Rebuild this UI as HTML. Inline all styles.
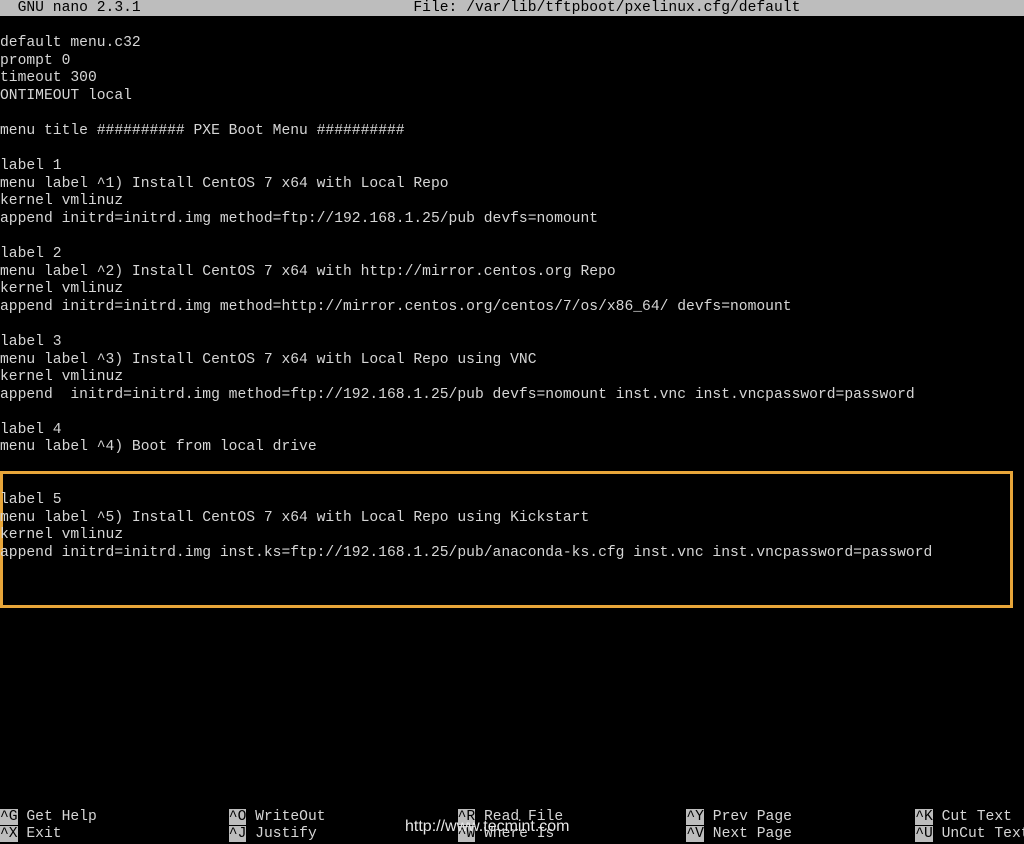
<!DOCTYPE html>
<html><head><meta charset="utf-8"><style>
html,body{margin:0;padding:0;background:#000;width:1024px;height:844px;overflow:hidden}
pre{margin:0;position:absolute;left:0;top:0;font-family:"Liberation Mono","DejaVu Sans Mono",monospace;font-size:14.67px;line-height:17.58px;color:#d6d6d6;white-space:pre}
.bar{position:absolute;left:0;top:0;width:1024px;height:16px;background:#bdbdbd}
.t{color:#000}
.k{background:#bdbdbd;color:#000}
.box{position:absolute;left:0;top:471px;width:1007px;height:131px;border:3px solid #e8a63a;box-sizing:content-box}
.wm{position:absolute;left:405px;top:818px;font-family:"Liberation Sans",sans-serif;font-size:16px;color:#e8e8e8}
.sc{position:absolute;left:0;font-family:"Liberation Mono","DejaVu Sans Mono",monospace;font-size:14.67px;line-height:17.58px;color:#d6d6d6;white-space:pre;width:1100px}
.sc span.c{display:inline-block;width:228.8px}
</style></head><body>
<div class="bar"></div>
<div class="box"></div>
<pre><span class="t">  GNU nano 2.3.1                               File: /var/lib/tftpboot/pxelinux.cfg/default</span>

default menu.c32
prompt 0
timeout 300
ONTIMEOUT local

menu title ########## PXE Boot Menu ##########

label 1
menu label ^1) Install CentOS 7 x64 with Local Repo
kernel vmlinuz
append initrd=initrd.img method=ftp://192.168.1.25/pub devfs=nomount

label 2
menu label ^2) Install CentOS 7 x64 with http://mirror.centos.org Repo
kernel vmlinuz
append initrd=initrd.img method=http://mirror.centos.org/centos/7/os/x86_64/ devfs=nomount

label 3
menu label ^3) Install CentOS 7 x64 with Local Repo using VNC
kernel vmlinuz
append  initrd=initrd.img method=ftp://192.168.1.25/pub devfs=nomount inst.vnc inst.vncpassword=password

label 4
menu label ^4) Boot from local drive


label 5
menu label ^5) Install CentOS 7 x64 with Local Repo using Kickstart
kernel vmlinuz
append initrd=initrd.img inst.ks=ftp://192.168.1.25/pub/anaconda-ks.cfg inst.vnc inst.vncpassword=password</pre>
<div class="sc" style="top:808.7px"><span class="c"><span class="k">^G</span> Get Help</span><span class="c"><span class="k">^O</span> WriteOut</span><span class="c"><span class="k">^R</span> Read File</span><span class="c"><span class="k">^Y</span> Prev Page</span><span class="c"><span class="k">^K</span> Cut Text</span></div>
<div class="sc" style="top:826.3px"><span class="c"><span class="k">^X</span> Exit</span><span class="c"><span class="k">^J</span> Justify</span><span class="c"><span class="k">^W</span> Where Is</span><span class="c"><span class="k">^V</span> Next Page</span><span class="c"><span class="k">^U</span> UnCut Text</span></div>
<div class="wm">http://www.tecmint.com</div>
</body></html>
